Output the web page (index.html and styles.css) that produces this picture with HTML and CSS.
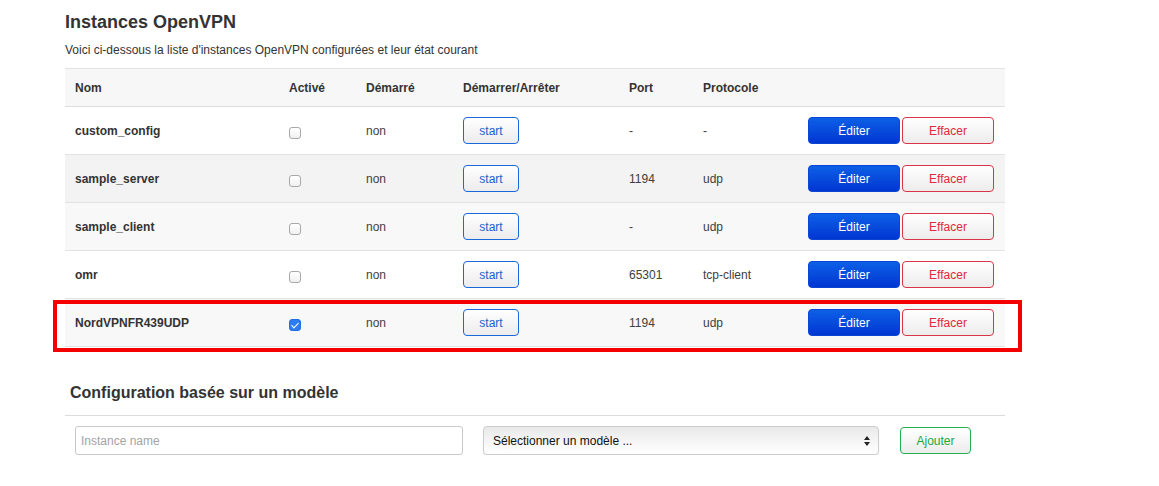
FILE: index.html
```html
<!DOCTYPE html>
<html lang="fr">
<head>
  <meta charset="UTF-8">
  <title>OpenVPN</title>
  <link rel="stylesheet" href="styles.css">
</head>
<body>
<div class="page">
  <h2 class="title">Instances OpenVPN</h2>
  <p class="desc">Voici ci-dessous la liste d'instances OpenVPN configurées et leur état courant</p>

  <div class="table-wrap">
    <table class="instances">
      <colgroup>
        <col class="c-name"><col class="c-en"><col class="c-run"><col class="c-act"><col class="c-port"><col class="c-proto"><col class="c-btn">
      </colgroup>
      <thead>
        <tr><th>Nom</th><th>Activé</th><th>Démarré</th><th>Démarrer/Arrêter</th><th>Port</th><th>Protocole</th><th></th></tr>
      </thead>
      <tbody>
        <tr class="r-white">
          <td class="name">custom_config</td>
          <td><input type="checkbox" class="chk"></td>
          <td>non</td>
          <td><button class="btn-start">start</button></td>
          <td>-</td><td>-</td>
          <td class="actions"><button class="btn-edit">Éditer</button><button class="btn-del">Effacer</button></td>
        </tr>
        <tr class="r-grey">
          <td class="name">sample_server</td>
          <td><input type="checkbox" class="chk"></td>
          <td>non</td>
          <td><button class="btn-start">start</button></td>
          <td>1194</td><td>udp</td>
          <td class="actions"><button class="btn-edit">Éditer</button><button class="btn-del">Effacer</button></td>
        </tr>
        <tr class="r-light">
          <td class="name">sample_client</td>
          <td><input type="checkbox" class="chk"></td>
          <td>non</td>
          <td><button class="btn-start">start</button></td>
          <td>-</td><td>udp</td>
          <td class="actions"><button class="btn-edit">Éditer</button><button class="btn-del">Effacer</button></td>
        </tr>
        <tr class="r-white">
          <td class="name">omr</td>
          <td><input type="checkbox" class="chk"></td>
          <td>non</td>
          <td><button class="btn-start">start</button></td>
          <td>65301</td><td>tcp-client</td>
          <td class="actions"><button class="btn-edit">Éditer</button><button class="btn-del">Effacer</button></td>
        </tr>
        <tr class="r-light">
          <td class="name">NordVPNFR439UDP</td>
          <td><input type="checkbox" class="chk" checked></td>
          <td>non</td>
          <td><button class="btn-start">start</button></td>
          <td>1194</td><td>udp</td>
          <td class="actions"><button class="btn-edit">Éditer</button><button class="btn-del">Effacer</button></td>
        </tr>
      </tbody>
    </table>
    <div class="highlight"></div>
  </div>

  <h3 class="subtitle">Configuration basée sur un modèle</h3>
  <div class="template-row">
    <input type="text" class="inst-name" placeholder="Instance name">
    <div class="select">
      <span>Sélectionner un modèle ...</span>
      <svg width="6" height="10" viewBox="0 0 6 10"><path d="M3 0L6 4H0z M3 10L0 6H6z" fill="#222"/></svg>
    </div>
    <button class="btn-add">Ajouter</button>
  </div>
</div>
</body>
</html>
```

FILE: styles.css
```css
* {
  margin: 0;
  padding: 0;
  box-sizing: border-box;
  font-family: "Liberation Sans", Arial, sans-serif;
}
body {
  background-color: #fff;
  color: #404040;
}
.page {
  padding: 11px 0 0 65px;
  width: 1005px;
}
.title {
  font-size: 18px;
  line-height: 22px;
  color: #333;
}
.desc {
  font-size: 12px;
  line-height: 15px;
  margin-top: 10px;
  color: #333;
}
.table-wrap {
  position: relative;
  margin-top: 10px;
}
.instances {
  width: 940px;
  border-collapse: collapse;
  table-layout: fixed;
  font-size: 12px;
}
.c-name { width: 214px; }
.c-en { width: 77px; }
.c-run { width: 97px; }
.c-act { width: 166px; }
.c-port { width: 74px; }
.c-proto { width: 105px; }
.c-btn { width: 207px; }
.instances th {
  text-align: left;
  height: 38px;
  padding: 0 10px;
  background-color: #f7f7f7;
  border-top: 1px solid #e2e2e2;
  border-bottom: 1px solid #dedede;
  color: #333;
}
.instances td {
  height: 48px;
  padding: 0 10px;
  border-bottom: 1px solid #e2e2e2;
  vertical-align: middle;
}
.instances td.name {
  font-weight: bold;
  color: #333;
}
.r-white td { background-color: #fff; }
.r-grey td { background-color: #f3f3f3; }
.r-light td { background-color: #f8f8f8; }
.chk {
  appearance: none;
  width: 12px;
  height: 12px;
  border: 1px solid #a8a8a8;
  border-radius: 3px;
  background: linear-gradient(#fff, #f0f0f0);
  vertical-align: middle;
  margin-top: 4px;
}
.chk:checked {
  border-color: #1f6fe6;
  background: #2f7bf0 no-repeat center;
  position: relative;
}
.chk:checked::after {
  content: "";
  position: absolute;
  left: 3px;
  top: 1px;
  width: 3px;
  height: 6px;
  border: solid #fff;
  border-width: 0 1.5px 1.5px 0;
  transform: rotate(45deg);
}
button {
  font-size: 12px;
  cursor: pointer;
  border-radius: 4px;
  height: 27px;
}
.btn-start {
  width: 56px;
  border: 1px solid #1a68dc;
  color: #1a5fd0;
  background: linear-gradient(#fff, #ececec);
}
.actions {
  white-space: nowrap;
}
.btn-edit {
  width: 92px;
  border: 1px solid #0a45d6;
  color: #fff;
  background: linear-gradient(#0d60e6, #0036d2);
}
.btn-del {
  width: 92px;
  margin-left: 2px;
  border: 1px solid #d9344a;
  color: #e0283e;
  background: linear-gradient(#fff, #ececec);
}
.highlight {
  position: absolute;
  left: -12px;
  top: 232px;
  width: 969px;
  height: 52px;
  border: 4px solid #f50000;
}
.subtitle {
  font-size: 16px;
  line-height: 20px;
  color: #333;
  margin: 36px 0 0 5px;
}
.template-row {
  width: 940px;
  margin-top: 12px;
  border-top: 1px solid #dcdcdc;
  padding: 10px 0 0 10px;
  display: flex;
  align-items: center;
}
.inst-name {
  width: 388px;
  height: 29px;
  border: 1px solid #c9c9c9;
  border-radius: 3px;
  padding: 0 5px;
  font-size: 12px;
}
.inst-name::placeholder {
  color: #a3a3a3;
}
.select {
  width: 396px;
  height: 29px;
  margin-left: 20px;
  border: 1px solid #cdcdcd;
  border-radius: 4px;
  background: linear-gradient(#e9e9e9, #f7f7f7 60%, #fff);
  box-shadow: 0 1px 1px rgba(0, 0, 0, 0.12);
  display: flex;
  align-items: center;
  justify-content: space-between;
  padding: 0 8px 0 9px;
  font-size: 12px;
  color: #111;
}
.btn-add {
  width: 71px;
  margin-left: 21px;
  border: 1px solid #22b14c;
  color: #1aa83e;
  background: linear-gradient(#fff, #ececec);
}
```
